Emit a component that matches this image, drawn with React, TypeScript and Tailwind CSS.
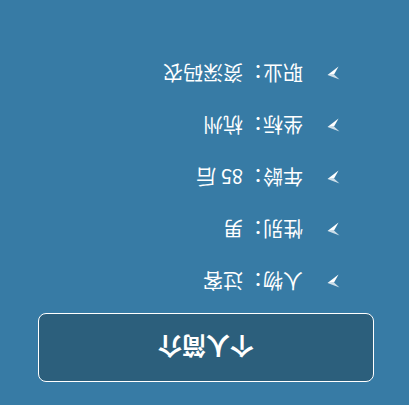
const items = [
  { label: "人物", value: "过客" },
  { label: "性别", value: "男" },
  { label: "年龄", value: "85 后" },
  { label: "坐标", value: "杭州" },
  { label: "职业", value: "资深码农" },
]

function Arrow() {
  return (
    <svg width="13" height="14" viewBox="0 0 13 14" className="shrink-0">
      <polygon points="12.5,5 0.5,0.5 6,5.5" fill="#ffffff" fillOpacity="0.75" />
      <polygon points="12.5,5 6,5.5 1.5,13.5" fill="#ffffff" />
    </svg>
  )
}

export default function App() {
  return (
    <div
      className="w-[409px] h-[405px] bg-[#377ba5] rotate-180 overflow-hidden"
      style={{ fontFamily: '"Noto Sans CJK SC", "Noto Sans", sans-serif' }}
    >
      <div className="pt-[23px] pl-[35px]">
        <button className="w-[336px] h-[69px] rounded-lg border border-white bg-[#2c5f7c] text-white text-[24px] font-bold flex items-center justify-center">
          个人简介
        </button>
        <ul className="mt-[6px] pl-[34px]">
          {items.map((item) => (
            <li
              key={item.label}
              className="h-[52px] flex items-center gap-[24px] text-white text-[20px]"
            >
              <Arrow />
              <span>
                {item.label}：{item.value}
              </span>
            </li>
          ))}
        </ul>
      </div>
    </div>
  )
}
